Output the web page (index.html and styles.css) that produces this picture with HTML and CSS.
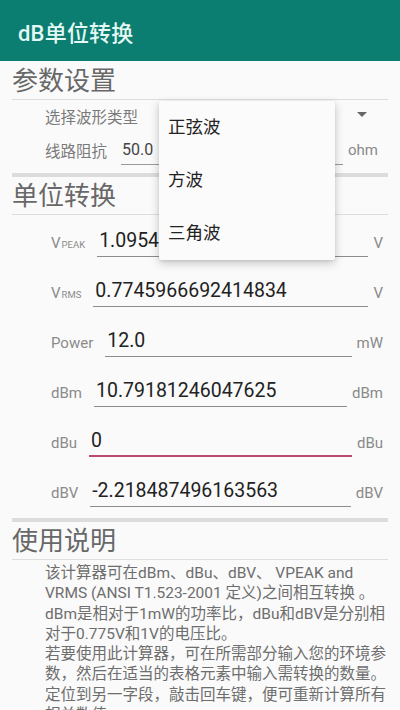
FILE: index.html
```html
<!DOCTYPE html>
<html lang="zh-CN">
<head>
<meta charset="utf-8">
<title>dB单位转换</title>
<link rel="stylesheet" href="styles.css">
</head>
<body>
<header class="appbar"><h1 class="appbar-title">dB单位转换</h1></header>
<main class="content">
  <section class="group group-first">
    <h2 class="group-title">参数设置</h2>
    <div class="param-row spinner-row">
      <span class="param-label">选择波形类型</span>
      <span class="spinner-arrow"></span>
    </div>
    <div class="param-row">
      <span class="param-label">线路阻抗</span>
      <span class="param-field">50.0</span>
      <span class="param-unit">ohm</span>
    </div>
    <div class="menu">
      <div class="menu-item">正弦波</div>
      <div class="menu-item">方波</div>
      <div class="menu-item">三角波</div>
    </div>
  </section>
  <div class="divider"></div>
  <section class="group">
    <h2 class="group-title">单位转换</h2>
    <div class="conv-rows">
      <div class="conv-row">
        <span class="conv-label">V<small>PEAK</small></span>
        <span class="conv-field">1.0954451150103321</span>
        <span class="conv-unit">V</span>
      </div>
      <div class="conv-row">
        <span class="conv-label">V<small>RMS</small></span>
        <span class="conv-field">0.7745966692414834</span>
        <span class="conv-unit">V</span>
      </div>
      <div class="conv-row">
        <span class="conv-label">Power</span>
        <span class="conv-field">12.0</span>
        <span class="conv-unit">mW</span>
      </div>
      <div class="conv-row">
        <span class="conv-label">dBm</span>
        <span class="conv-field">10.79181246047625</span>
        <span class="conv-unit">dBm</span>
      </div>
      <div class="conv-row">
        <span class="conv-label">dBu</span>
        <span class="conv-field focused">0</span>
        <span class="conv-unit">dBu</span>
      </div>
      <div class="conv-row">
        <span class="conv-label">dBV</span>
        <span class="conv-field">-2.218487496163563</span>
        <span class="conv-unit">dBV</span>
      </div>
    </div>
  </section>
  <div class="divider tight"></div>
  <section class="group">
    <h2 class="group-title">使用说明</h2>
    <p class="help">
      <span class="line">该计算器可在dBm、dBu、dBV、 VPEAK and</span>
      <span class="line">VRMS (ANSI T1.523-2001 定义)之间相互转换 。</span>
      <span class="line">dBm是相对于1mW的功率比，dBu和dBV是分别相</span>
      <span class="line">对于0.775V和1V的电压比。</span>
      <span class="line">若要使用此计算器，可在所需部分输入您的环境参</span>
      <span class="line">数，然后在适当的表格元素中输入需转换的数量。</span>
      <span class="line">定位到另一字段，敲击回车键，便可重新计算所有</span>
      <span class="line">相关数值。</span>
    </p>
  </section>
</main>
</body>
</html>
```

FILE: styles.css
```css
* { box-sizing: border-box; }
html, body { margin: 0; padding: 0; }
body {
  background: #fafafa;
  font-family: Roboto, "Noto Sans CJK SC", "Noto Sans", sans-serif;
  width: 400px;
  height: 710px;
  overflow: hidden;
}
.appbar {
  height: 61px;
  background: #0b7d71;
  display: flex;
  align-items: center;
  padding-left: 18px;
}
.appbar-title {
  margin: 0;
  font-size: 22px;
  font-weight: 500;
  color: #e4f8f4;
  letter-spacing: 0.2px;
}
.content {
  padding: 0 12px;
}
.group { position: relative; }
.group-title {
  margin: 1px 0 0 0;
  height: 37px;
  line-height: 36px;
  font-size: 26px;
  font-weight: 400;
  color: #686868;
  border-bottom: 1px solid #dedede;
}
.group-first .group-title { margin-top: 2px; }
.param-row {
  display: flex;
  align-items: center;
  height: 36px;
  padding-left: 33px;
  padding-right: 10px;
}
.spinner-row { height: 32px; padding-right: 21px; }
.param-label {
  font-size: 15.5px;
  color: #7a7a7a;
  margin-right: 14px;
}
.spinner-arrow {
  margin-left: auto;
  width: 0;
  height: 0;
  border-left: 5px solid transparent;
  border-right: 5px solid transparent;
  border-top: 5px solid #666;
  margin-top: -4px;
}
.param-field {
  flex: 1;
  height: 30px;
  line-height: 29px;
  font-size: 16px;
  color: #444;
  padding-left: 1px;
  border-bottom: 1px solid #9a9a9a;
}
.param-unit {
  margin-left: 5px;
  font-size: 15px;
  color: #8a8a8a;
}
.divider {
  margin-top: 5px;
  height: 4px;
  background: #dcdcdc;
}
.conv-rows { padding-top: 3px; }
.conv-row {
  display: flex;
  align-items: center;
  height: 50px;
  padding-left: 39px;
  padding-right: 5px;
}
.conv-label {
  font-size: 15px;
  color: #8a8a8a;
  margin-right: 12px;
  white-space: nowrap;
}
.conv-label small {
  font-size: 9.5px;
  margin-left: 1px;
}
.conv-field {
  flex: 1;
  min-width: 0;
  height: 30px;
  line-height: 28px;
  font-size: 19.5px;
  color: #222;
  padding-left: 2px;
  white-space: nowrap;
  overflow: hidden;
  border-bottom: 1.5px solid #8c8c8c;
  margin-top: -2px;
}
.conv-field.focused { border-bottom: 2px solid #b94a6d; }
.conv-unit {
  margin-left: 5px;
  font-size: 15px;
  color: #8a8a8a;
}
.divider.tight { margin-top: 0; }
.help {
  margin: 0;
  padding: 3px 0 0 33px;
  font-size: 15.5px;
  line-height: 20.3px;
  color: #6e6e6e;
}
.help .line {
  display: block;
  white-space: nowrap;
}
.menu {
  position: absolute;
  left: 147px;
  top: 38px;
  width: 176px;
  background: #fbfbfb;
  box-shadow: 0 3px 10px rgba(0, 0, 0, 0.22), 0 1px 3px rgba(0, 0, 0, 0.08);
  border-radius: 2px;
  z-index: 5;
}
.menu-item {
  height: 53px;
  line-height: 53px;
  padding-left: 9px;
  font-size: 17.5px;
  color: #222;
}
```
